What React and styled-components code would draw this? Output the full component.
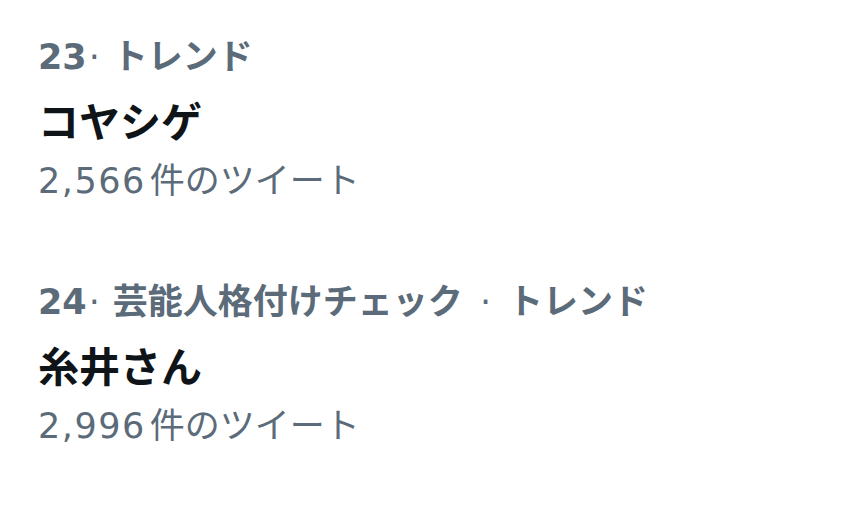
import styled, { createGlobalStyle } from 'styled-components'

const Global = createGlobalStyle`
    html, body {
        margin: 0;
        padding: 0;
        background: #ffffff;
    }
    body {
        font-family: "DejaVu Sans", "Noto Sans CJK JP", sans-serif;
    }
`

const List = styled.div`
    display: flex;
    flex-direction: column;
    gap: 59px;
    padding: 26px 38px;
`

const Trend = styled.div`
    display: flex;
    flex-direction: column;
`

const Meta = styled.div`
    color: #5b6b79;
    font-size: 35px;
    font-weight: 700;
    line-height: 62px;
    white-space: nowrap;
`

const Num = styled.span`
    letter-spacing: ${props => props.$spacing || '0'};
    margin-right: ${props => props.$gap || '0'};
`

const Dot = styled.span`
    display: inline-block;
    margin: 0 ${props => props.$wide ? '17px' : '13px'} 0 ${props => props.$wide ? '17px' : '2px'};
    font-weight: 400;
`

const Title = styled.div`
    color: #0f1419;
    font-family: "Noto Sans CJK JP", sans-serif;
    font-size: 41px;
    font-weight: 700;
    line-height: 62px;
`

const Count = styled.div`
    color: #5b6b79;
    font-size: 35px;
    font-weight: 400;
    line-height: 62px;
`

const trends = [
    { rank: 23, topics: [], title: 'コヤシゲ', count: '2,566' },
    { rank: 24, topics: ['芸能人格付けチェック'], title: '糸井さん', count: '2,996' },
]

export default function App() {
    return (
        <>
            <Global />
            <List>
                {trends.map(t => (
                    <Trend key={t.rank}>
                        <Meta>
                            <Num>{t.rank}</Num><Dot>·</Dot>
                            {t.topics.map(topic => (
                                <span key={topic}>{topic}<Dot $wide>·</Dot></span>
                            ))}
                            トレンド
                        </Meta>
                        <Title>{t.title}</Title>
                        <Count><Num $spacing="1.5px" $gap="4px">{t.count}</Num>件のツイート</Count>
                    </Trend>
                ))}
            </List>
        </>
    )
}
